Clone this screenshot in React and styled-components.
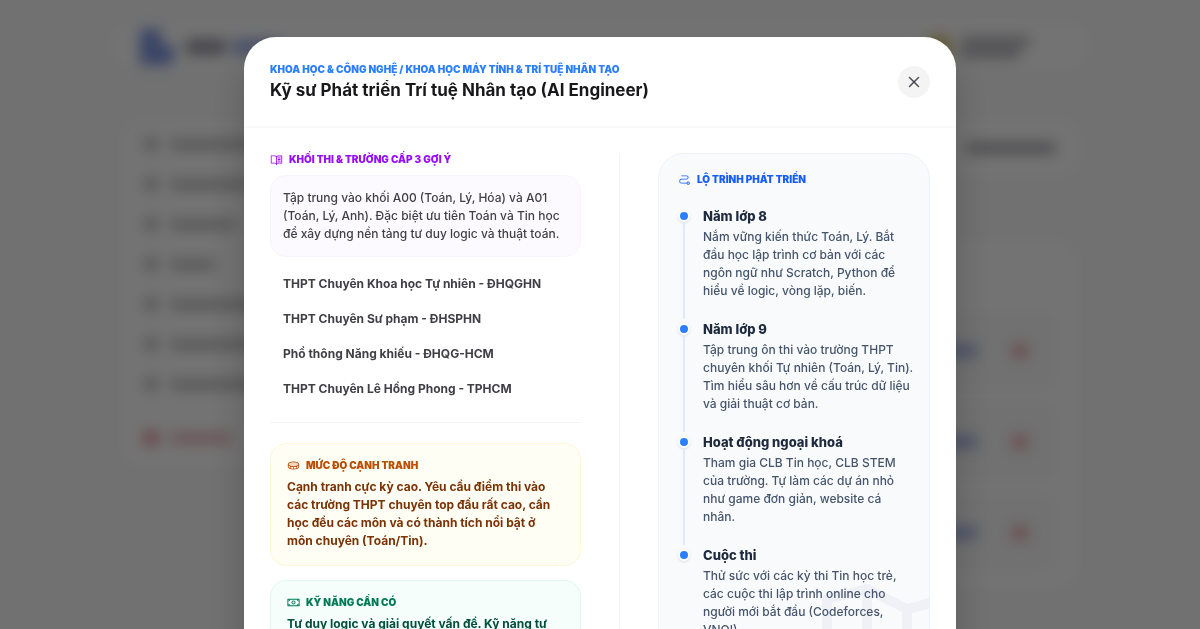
import React from 'react'
import styled, { createGlobalStyle } from 'styled-components'
import {
  PiBookOpenTextDuotone,
  PiCoinDuotone,
  PiMapTrifold,
  PiMoneyDuotone,
  PiPathDuotone,
  PiX,
} from 'react-icons/pi'


const schools = [
  'THPT Chuyên Khoa học Tự nhiên - ĐHQGHN',
  'THPT Chuyên Sư phạm - ĐHSPHN',
  'Phổ thông Năng khiếu - ĐHQG-HCM',
  'THPT Chuyên Lê Hồng Phong - TPHCM',
]

const steps = [
  {
    title: 'Năm lớp 8',
    text: 'Nắm vững kiến thức Toán, Lý. Bắt\nđầu học lập trình cơ bản với các\nngôn ngữ như Scratch, Python để\nhiểu về logic, vòng lặp, biến.',
  },
  {
    title: 'Năm lớp 9',
    text: 'Tập trung ôn thi vào trường THPT\nchuyên khối Tự nhiên (Toán, Lý, Tin).\nTìm hiểu sâu hơn về cấu trúc dữ liệu\nvà giải thuật cơ bản.',
  },
  {
    title: 'Hoạt động ngoại khoá',
    text: 'Tham gia CLB Tin học, CLB STEM\ncủa trường. Tự làm các dự án nhỏ\nnhư game đơn giản, website cá\nnhân.',
  },
  {
    title: 'Cuộc thi',
    text: 'Thử sức với các kỳ thi Tin học trẻ,\ncác cuộc thi lập trình online cho\nngười mới bắt đầu (Codeforces,\nVNOI).',
  },
]

const menuWidths = [84, 80, 66, 46, 90, 84, 88]


const Backdrop = () => (
  <Page aria-hidden="true">
    <TopBar>
      <Brand>
        <svg width="34" height="36" viewBox="0 0 34 36">
          <path d="M0 0h21v16h13v12q0 8-8 8H0z" fill="#7f97e2" />
        </svg>
        <Bar $w={40} $h={16} $color="#9c9ca6" />
        <Bar $w={48} $h={16} $color="#a6b5ea" />
      </Brand>
      <User>
        <Bar $w={22} $h={22} $color="#dcc070" />
        <UserLines>
          <Bar $w={70} $h={9} $color="#acacb2" />
          <Bar $w={60} $h={9} $color="#acacb2" />
        </UserLines>
      </User>
    </TopBar>

    <Columns>
      <Side>
        {menuWidths.map((w, i) => (
          <MenuRow key={i}>
            <Bar $w={14} $h={14} $color="#c2c2c6" />
            <Bar $w={w} $h={9} $color="#b8b8bd" />
          </MenuRow>
        ))}
        <MenuRow $last>
          <Bar $w={14} $h={14} $color="#e88c94" />
          <Bar $w={62} $h={10} $color="#eeb4b9" />
        </MenuRow>
      </Side>
      <Main>
        <Search>
          <Bar $w={90} $h={12} $color="#b0b0b6" />
        </Search>
        <Results>
          {[0, 1, 2].map((i) => (
            <Result key={i}>
              <Bar $w={38} $h={12} $color="#a4b1e6" />
              <Bar $w={14} $h={14} $color="#eca0a6" />
            </Result>
          ))}
        </Results>
      </Main>
    </Columns>
  </Page>
)


const App = () => {
  return (
    <>
      <GlobalStyle />
      <Backdrop />

      <Overlay>
        <Modal role="dialog" aria-modal="true" aria-labelledby="career-title">
          <Header>
            <div>
              <Crumb>Khoa học &amp; Công nghệ / Khoa học máy tính &amp; Trí tuệ nhân tạo</Crumb>
              <Title id="career-title">Kỹ sư Phát triển Trí tuệ Nhân tạo (AI Engineer)</Title>
            </div>
            <CloseButton type="button" aria-label="Đóng">
              <PiX size={16} strokeWidth={8} />
            </CloseButton>
          </Header>

          <Body>
            <Left>
              <SectionTitle $color="#9810fa">
                <PiBookOpenTextDuotone size={13} />
                Khối thi &amp; trường cấp 3 gợi ý
              </SectionTitle>
              <Note>{'Tập trung vào khối A00 (Toán, Lý, Hóa) và A01\n(Toán, Lý, Anh). Đặc biệt ưu tiên Toán và Tin học\nđể xây dựng nền tảng tư duy logic và thuật toán.'}</Note>

              <SchoolList>
                {schools.map((school) => (
                  <School key={school}>{school}</School>
                ))}
              </SchoolList>

              <InfoCard $bg="#fffef5" $border="#fef8d8" $color="#7b3306">
                <SectionTitle $color="#bb4d00">
                  <PiCoinDuotone size={13} />
                  Mức độ cạnh tranh
                </SectionTitle>
                <InfoText>{'Cạnh tranh cực kỳ cao. Yêu cầu điểm thi vào\ncác trường THPT chuyên top đầu rất cao, cần\nhọc đều các môn và có thành tích nổi bật ở\nmôn chuyên (Toán/Tin).'}</InfoText>
              </InfoCard>

              <InfoCard $bg="#f5fefb" $border="#dcfbee" $color="#004f3b">
                <SectionTitle $color="#007a55">
                  <PiMoneyDuotone size={13} />
                  Kỹ năng cần có
                </SectionTitle>
                <InfoText>{'Tư duy logic và giải quyết vấn đề. Kỹ năng tự'}</InfoText>
              </InfoCard>
            </Left>

            <Roadmap>
              <Watermark>
                <PiMapTrifold size={160} />
              </Watermark>
              <SectionTitle $color="#155dfc">
                <PiPathDuotone size={13} />
                Lộ trình phát triển
              </SectionTitle>
              <Steps>
                {steps.map((step, i) => (
                  <Step key={step.title}>
                    <Marker>
                      <Dot />
                      {i < steps.length - 1 && <Line />}
                    </Marker>
                    <div>
                      <StepTitle>{step.title}</StepTitle>
                      <StepText>{step.text}</StepText>
                    </div>
                  </Step>
                ))}
              </Steps>
            </Roadmap>
          </Body>
        </Modal>
      </Overlay>
    </>
  )
}

export default App


const GlobalStyle = createGlobalStyle`

  * {
    box-sizing: border-box;
  }

  body {
    margin: 0;
    overflow: hidden;
    background: #fafafc;
    font-family: Inter, "Noto Sans", sans-serif;
  }

`;


const Page = styled.div`

  min-height: 100vh;
  padding: 22px 24px;
  background: #fafafc;

`;

const Bar = styled.span`
  flex: none;
  width: ${(p) => p.$w}px;
  height: ${(p) => p.$h}px;
  border-radius: 4px;
  background: ${(p) => p.$color};
`;

const TopBar = styled.div`

  display: flex;
  justify-content: space-between;
  align-items: center;
  max-width: 980px;
  height: 50px;
  margin: 0 auto;
  padding: 0 60px 0 30px;
  border-radius: 24px;
  background: white;
  box-shadow: 0 4px 16px rgba(0, 0, 0, 0.02);

`;

const Brand = styled.div`
  display: flex;
  align-items: center;
  gap: 6px;

  svg {
    margin-right: 6px;
  }
`;

const User = styled.div`
  display: flex;
  align-items: center;
  gap: 10px;
`;

const UserLines = styled.div`
  display: flex;
  flex-direction: column;
  gap: 3px;
`;

const Columns = styled.div`

  display: flex;
  align-items: flex-start;
  gap: 20px;
  max-width: 960px;
  margin: 46px auto 0;

`;

const Side = styled.div`
  width: 220px;
  padding: 6px 24px 12px;
  border-radius: 24px;
  background: white;
  box-shadow: 0 4px 16px rgba(0, 0, 0, 0.02);
`;

const MenuRow = styled.div`
  display: flex;
  align-items: center;
  gap: 12px;
  height: 40px;
  margin-top: ${(p) => (p.$last ? '14px' : '0')};
`;

const Main = styled.div`
  flex: 1;
  display: flex;
  flex-direction: column;
  gap: 62px;
`;

const Search = styled.div`
  display: flex;
  justify-content: flex-end;
  align-items: center;
  height: 60px;
  padding: 0 24px;
  border-radius: 24px;
  background: white;
`;

const Results = styled.div`
  display: flex;
  flex-direction: column;
  gap: 14px;
  padding: 72px 24px 20px;
  border-radius: 24px;
  background: white;
  box-shadow: 0 4px 16px rgba(0, 0, 0, 0.02);
`;

const Result = styled.div`
  display: flex;
  justify-content: flex-end;
  align-items: center;
  gap: 36px;
  height: 77px;
  padding-right: 29px;
  border-radius: 16px;
  background: #fafafa;
`;


const Overlay = styled.div`

  position: fixed;
  inset: 0;
  display: flex;
  justify-content: center;
  align-items: flex-start;
  padding: 37px 24px 0;
  overflow: hidden;
  background: rgba(0, 0, 0, 0.55);
  backdrop-filter: blur(7px);

`;


const Modal = styled.div`

  width: 100%;
  max-width: 712px;
  border-radius: 32px 32px 0 0;
  background: white;
  box-shadow: 0 20px 40px rgba(0, 0, 0, 0.2);

`;

const Header = styled.header`

  display: flex;
  justify-content: space-between;
  align-items: center;
  padding: 24px 26px 23px;
  border-bottom: 2px solid #f9f9fa;

`;

const Crumb = styled.p`
  margin: 0;
  font-size: 10px;
  line-height: 16px;
  font-weight: 900;
  text-transform: uppercase;
  color: #2b7fff;
`;

const Title = styled.h2`
  margin: 0;
  font-size: 17px;
  line-height: 26px;
  font-weight: 700;
  color: #18181b;
`;

const CloseButton = styled.button`
  display: flex;
  justify-content: center;
  align-items: center;
  width: 32px;
  height: 32px;
  padding: 0;
  border: none;
  border-radius: 50%;
  background: #f4f4f5;
  color: #3f3f46;
  cursor: pointer;
`;


const Body = styled.div`

  display: grid;
  grid-template-columns: 350fr 272fr;
  gap: 38px;
  padding: 25px 26px;

`;

const Left = styled.section`
  padding-right: 38px;
  border-right: 1px solid #f4f4f5;
`;

const SectionTitle = styled.h3`

  display: flex;
  align-items: center;
  gap: 6px;
  margin: 0;
  font-size: 10px;
  line-height: 13px;
  font-weight: 900;
  text-transform: uppercase;
  color: ${(p) => p.$color};

`;

const Note = styled.p`
  margin: 9px 0;
  padding: 13px 12px;
  border: 1px solid #f8f4ff;
  border-radius: 16px;
  background: #fcfaff;
  font-size: 12px;
  line-height: 18px;
  font-weight: 500;
  white-space: pre;
  color: #3f3f46;
`;

const SchoolList = styled.ul`
  display: flex;
  flex-direction: column;
  margin: 0 0 20px;
  padding: 0 0 16px;
  border-bottom: 1px solid #f4f4f5;
  list-style: none;
`;

const School = styled.li`
  padding: 0 13px;
  font-size: 12px;
  line-height: 35px;
  font-weight: 700;
  color: #3f3f46;
`;

const InfoCard = styled.div`
  margin-bottom: 14px;
  padding: 15px 16px;
  border: 1px solid ${(p) => p.$border};
  border-radius: 16px;
  background: ${(p) => p.$bg};
  color: ${(p) => p.$color};
`;

const InfoText = styled.p`
  margin: 6px 0 0;
  font-size: 12px;
  line-height: 18px;
  font-weight: 700;
  white-space: pre;
`;


const Roadmap = styled.section`

  position: relative;
  z-index: 0;
  overflow: hidden;
  padding: 19px;
  border: 1px solid #eef2fa;
  border-radius: 26px;
  background: #f9fafc;

`;

const Watermark = styled.div`
  position: absolute;
  z-index: -1;
  right: -38px;
  top: 410px;
  height: 160px;
  color: #1c398e;
  opacity: 0.04;
`;

const Steps = styled.ol`
  margin: 20px 0 0;
  padding: 0;
  list-style: none;
`;

const Step = styled.li`
  display: flex;
  gap: 13px;
`;

const Marker = styled.div`
  display: flex;
  flex-direction: column;
  align-items: center;
  flex: none;
  width: 12px;
  padding-top: 4px;
`;

const Dot = styled.span`
  flex: none;
  width: 12px;
  height: 12px;
  border: 2px solid white;
  border-radius: 50%;
  background: #2b7fff;
  box-shadow: 0 1px 3px rgba(0, 0, 0, 0.12);
`;

const Line = styled.span`
  flex: 1;
  width: 2px;
  margin-top: 1px;
  background: #dbeafe;
`;

const StepTitle = styled.h4`
  margin: 0;
  font-size: 13px;
  line-height: 20px;
  font-weight: 800;
  color: #1d293d;
`;

const StepText = styled.p`
  margin: 2px 0 0;
  padding-bottom: 19px;
  font-size: 12px;
  line-height: 18px;
  font-weight: 500;
  white-space: pre;
  color: #45556c;
`;
